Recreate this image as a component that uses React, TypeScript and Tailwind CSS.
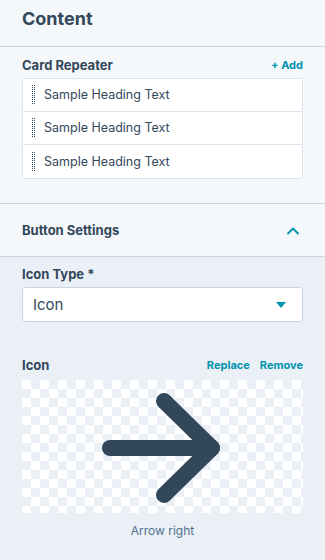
import React from "react";

const Grip = () => (
  <svg width="5" height="20" viewBox="0 0 5 20" className="shrink-0" shapeRendering="crispEdges">
    {Array.from({ length: 10 }).map((_, i) => (
      <g key={i}>
        <rect x="1" y={i * 2} width="1" height="1" fill="#33475b" />
        <rect x="3" y={i * 2} width="1" height="1" fill="#33475b" />
      </g>
    ))}
  </svg>
);

const Row = ({ last }: { last?: boolean }) => (
  <div
    className={`flex items-center h-[33px] pl-[8px] gap-[8px] bg-white ${
      last ? "" : "border-b border-[#dfe3eb]"
    }`}
  >
    <Grip />
    <span className="text-[12.5px] text-[#33475b] mt-[1px]">Sample Heading Text</span>
  </div>
);

export default function App() {
  return (
    <div
      className="w-[325px] h-[560px] overflow-hidden bg-[#f5f8fa] text-[#33475b]"
      style={{ fontFamily: "Inter, 'Noto Sans', sans-serif" }}
    >
      <div className="h-[47px] border-b border-[#cbd6e2] px-[22px] flex items-center">
        <h1 className="text-[18px] font-bold leading-none -mt-[8px]">Content</h1>
      </div>
      <div className="px-[22px] pb-[24px] border-b border-[#cbd6e2]">
        <div className="h-[31px] flex items-center justify-between pt-[6px]">
          <span className="text-[13px] font-bold">Card Repeater</span>
          <span className="text-[11px] font-bold text-[#0091ae]">+ Add</span>
        </div>
        <div className="border border-[#dfe3eb] rounded-[2px]">
          <Row />
          <Row />
          <Row last />
        </div>
      </div>
      <div className="h-[53px] border-b border-[#cbd6e2] px-[22px] flex items-center justify-between pt-[2px]">
        <span className="text-[13px] font-bold">Button Settings</span>
        <svg width="14" height="10" viewBox="0 0 14 10" className="mr-[3px]">
          <path d="M2 7.5 L7 2.5 L12 7.5" fill="none" stroke="#0091ae" strokeWidth="1.8" strokeLinecap="round" strokeLinejoin="round" />
        </svg>
      </div>
      <div className="bg-[#eaf0f6] px-[22px] h-[304px]">
        <div className="h-[30px] flex items-center pt-[6px]">
          <span className="text-[13px] font-bold">Icon Type *</span>
        </div>
        <div className="h-[35px] bg-white border border-[#cbd6e2] rounded-[3px] flex items-center justify-between pl-[10px] pr-[16px]">
          <span className="text-[15px] text-[#33475b] mt-[1px]">Icon</span>
          <svg width="10" height="6" viewBox="0 0 10 6">
            <path d="M0 0 H10 L5 6 Z" fill="#0091ae" />
          </svg>
        </div>
        <div className="h-[57px] flex items-end justify-between pb-[4px]">
          <span className="text-[13px] font-bold">Icon</span>
          <div className="flex gap-[10px] text-[11px] font-bold text-[#0091ae] mb-[2px]">
            <span>Replace</span>
            <span>Remove</span>
          </div>
        </div>
        <div className="h-[133px] mt-[1px] flex items-center justify-center bg-[conic-gradient(white_25%,#eaf0f6_0_50%,white_0_75%,#eaf0f6_0)] bg-[length:18px_18px] bg-[position:0px_-9px]">
          <svg width="130" height="110" viewBox="0 0 130 110" className="ml-[1px] mt-[2px]">
            <g fill="none" stroke="#33475b" strokeWidth="16" strokeLinecap="round" strokeLinejoin="round">
              <path d="M12 55 H114" />
              <path d="M66 8 L114 55 L66 102" />
            </g>
          </svg>
        </div>
        <div className="h-[36px] flex items-center justify-center">
          <span className="text-[12px] text-[#516f90]">Arrow right</span>
        </div>
      </div>
    </div>
  );
}
